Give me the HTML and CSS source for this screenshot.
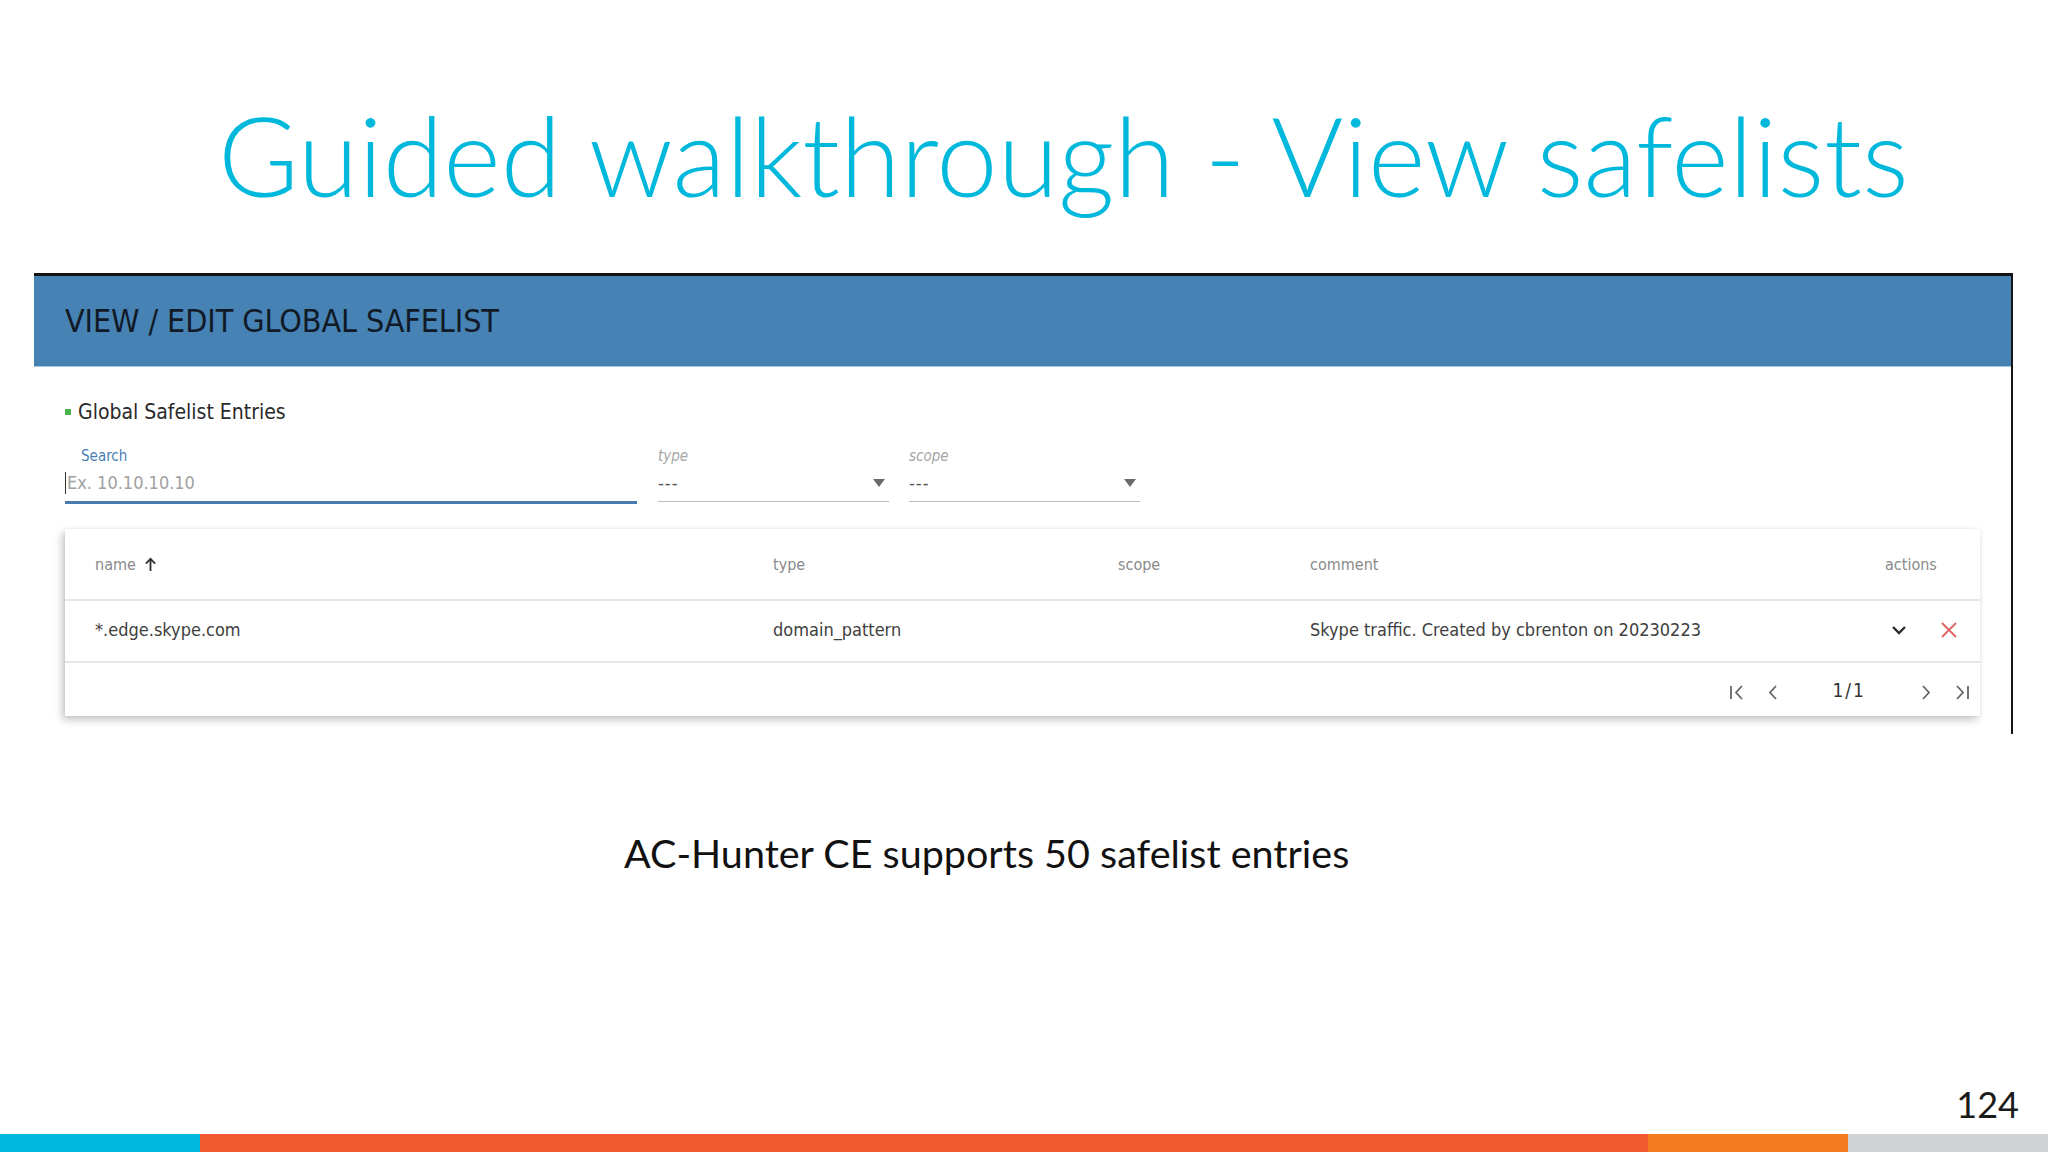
FILE: index.html
```html
<!DOCTYPE html>
<html lang="en">
<head>
<meta charset="utf-8">
<title>Guided walkthrough - View safelists</title>
<link rel="stylesheet" href="styles.css">
</head>
<body>
<div class="slide">
  <h1 class="title">Guided walkthrough - View safelists</h1>

  <section class="panel">
    <div class="panel-head">VIEW / EDIT GLOBAL SAFELIST</div>
    <div class="panel-body">
      <div class="section-title"><span class="bullet"></span>Global Safelist Entries</div>

      <div class="filters">
        <div class="field field-search">
          <div class="field-label label-search">Search</div>
          <div class="field-value"><span class="caret"></span><span class="placeholder">Ex. 10.10.10.10</span></div>
        </div>
        <div class="field field-select">
          <div class="field-label label-italic">type</div>
          <div class="field-value"><span class="dashes">---</span>
            <svg class="tri" viewBox="0 0 12 8" width="12" height="8"><path d="M0 0h12L6 8z" fill="#6b6b6b"/></svg>
          </div>
        </div>
        <div class="field field-select">
          <div class="field-label label-italic">scope</div>
          <div class="field-value"><span class="dashes">---</span>
            <svg class="tri" viewBox="0 0 12 8" width="12" height="8"><path d="M0 0h12L6 8z" fill="#6b6b6b"/></svg>
          </div>
        </div>
      </div>

      <div class="card">
        <div class="row row-head">
          <div class="cell">name
            <svg class="sort" viewBox="0 0 14 16" width="13" height="15"><path d="M7 15V2M2 7l5-5 5 5" fill="none" stroke="#333" stroke-width="2"/></svg>
          </div>
          <div class="cell">type</div>
          <div class="cell">scope</div>
          <div class="cell">comment</div>
          <div class="cell">actions</div>
        </div>
        <div class="row row-data">
          <div class="cell">*.edge.skype.com</div>
          <div class="cell">domain_pattern</div>
          <div class="cell"></div>
          <div class="cell">Skype traffic. Created by cbrenton on 20230223</div>
          <div class="cell actions">
            <svg viewBox="0 0 16 10" width="16" height="10"><path d="M2 2l6 6 6-6" fill="none" stroke="#2b2b2b" stroke-width="2.4"/></svg>
            <svg viewBox="0 0 18 18" width="18" height="18"><path d="M2 2l14 14M16 2L2 16" fill="none" stroke="#e06363" stroke-width="1.8"/></svg>
          </div>
        </div>
        <div class="row-foot">
          <svg class="pg" viewBox="0 0 20 20" width="20" height="20"><path d="M4 4v13M15 4l-6 6.5 6 6.5" fill="none" stroke="#666" stroke-width="1.8"/></svg>
          <svg class="pg pg-gap" viewBox="0 0 20 20" width="20" height="20"><path d="M13 4l-6 6.5 6 6.5" fill="none" stroke="#666" stroke-width="1.8"/></svg>
          <span class="pages">1/1</span>
          <svg class="pg pg-gap2" viewBox="0 0 20 20" width="20" height="20"><path d="M7 4l6 6.5-6 6.5" fill="none" stroke="#666" stroke-width="1.8"/></svg>
          <svg class="pg" viewBox="0 0 20 20" width="20" height="20"><path d="M5 4l6 6.5-6 6.5M16 4v13" fill="none" stroke="#666" stroke-width="1.8"/></svg>
        </div>
      </div>
    </div>
  </section>

  <p class="caption">AC-Hunter CE supports 50 safelist entries</p>

  <div class="footer">
    <div class="page-num">124</div>
    <div class="bar">
      <span class="seg seg-cyan"></span>
      <span class="seg seg-red"></span>
      <span class="seg seg-orange"></span>
      <span class="seg seg-gray"></span>
    </div>
  </div>
</div>
</body>
</html>
```

FILE: styles.css
```css
* { box-sizing: border-box; }
html, body { margin: 0; padding: 0; background: #fff; }
body { width: 2048px; height: 1152px; overflow: hidden; }

.slide {
  width: 2048px;
  height: 1152px;
  display: flex;
  flex-direction: column;
  font-family: Lato, "Open Sans", sans-serif;
}

.title {
  margin: 88px 0 0 218px;
  font-family: Lato, sans-serif;
  font-weight: 300;
  font-size: 110px;
  line-height: 1.2;
  color: #00b8dc;
  white-space: nowrap;
}

/* ---------- screenshot panel ---------- */
.panel {
  margin: 53px 0 0 34px;
  width: 1979px;
  height: 461px;
  border-top: 3px solid #141414;
  border-right: 2px solid #141414;
  background: #fff;
  font-family: "Liberation Sans Narrow", "DejaVu Sans Condensed", Roboto, sans-serif;
  display: flex;
  flex-direction: column;
}

.panel-head {
  height: 91px;
  background: #4682b4;
  border-bottom: 1px solid #9fcbe3;
  display: flex;
  align-items: center;
  padding-left: 31px;
  font-size: 32px;
  color: #111a26;
  letter-spacing: -0.1px;
}

.panel-body {
  padding: 33px 31px 0 31px;
  display: flex;
  flex-direction: column;
}

.section-title {
  display: flex;
  align-items: center;
  height: 24px;
  font-size: 21px;
  color: #2a2a2a;
}
.bullet {
  width: 6px;
  height: 6px;
  background: #4caf50;
  margin-right: 7px;
}

.filters {
  display: flex;
  gap: 21px;
  margin-top: 24px;
}
.field { display: flex; flex-direction: column; }
.field-search { width: 572px; border-bottom: 3px solid #4a7bb0; }
.field-select { width: 231px; border-bottom: 1px solid #bdbdbd; margin-bottom: 2px; }
.field-select + .field-select { margin-left: -1px; }

.field-label {
  height: 16px;
  line-height: 16px;
  font-size: 15px;
}
.label-search { color: #4a7fb5; padding-left: 16px; }
.label-italic { color: #a6a6a6; font-style: italic; }

.field-value {
  height: 37px;
  display: flex;
  align-items: center;
  font-size: 18px;
}
.caret { width: 1px; height: 22px; background: #333; margin-right: 1px; }
.placeholder { color: #a0a0a0; }
.dashes { color: #555; flex: 1; letter-spacing: 1px; }
.tri { margin-right: 4px; }

/* ---------- table card ---------- */
.card {
  margin-top: 25px;
  width: 1915px;
  background: #fff;
  box-shadow: -3px 4px 8px rgba(0,0,0,0.22), 0 0 3px rgba(0,0,0,0.08);
}
.row {
  display: grid;
  grid-template-columns: 678px 345px 192px 575px 75px;
  padding: 0 20px 0 30px;
  align-items: center;
  border-bottom: 2px solid #e6e6e6;
}
.row-head { height: 72px; font-size: 16px; color: #8a8a8a; }
.row-data { height: 62px; font-size: 18px; color: #404040; padding-bottom: 3px; }
.cell { display: flex; align-items: center; white-space: nowrap; }
.sort { margin-left: 8px; }
.actions { justify-content: space-between; padding-left: 6px; padding-right: 2px; }

.row-foot {
  height: 53px;
  display: flex;
  align-items: center;
  justify-content: flex-end;
  padding: 4px 8px 0 0;
  font-size: 19px;
  color: #333;
}
.pg { margin-left: 16px; }
.pg-gap { margin-left: 16px; margin-right: 49px; }
.pg-gap2 { margin-left: 50px; }
.pages { letter-spacing: 2px; margin-top: -3px; }

/* ---------- caption & footer ---------- */
.caption {
  margin: 95px 0 0 624px;
  font-family: Lato, sans-serif;
  font-size: 39.5px;
  color: #111;
  line-height: 1.2;
}

.footer {
  margin-top: auto;
  display: flex;
  flex-direction: column;
}
.page-num {
  align-self: flex-end;
  margin-right: 29px;
  margin-bottom: 8px;
  font-family: Lato, sans-serif;
  font-size: 36px;
  line-height: 1.2;
  color: #1a1a1a;
}
.bar { display: flex; height: 18px; }
.seg { display: block; height: 100%; }
.seg-cyan { width: 200px; background: #00b9e0; }
.seg-red { width: 1448px; background: #f15a31; }
.seg-orange { width: 200px; background: #f47b20; }
.seg-gray { flex: 1; background: #d0d2d3; }
```
